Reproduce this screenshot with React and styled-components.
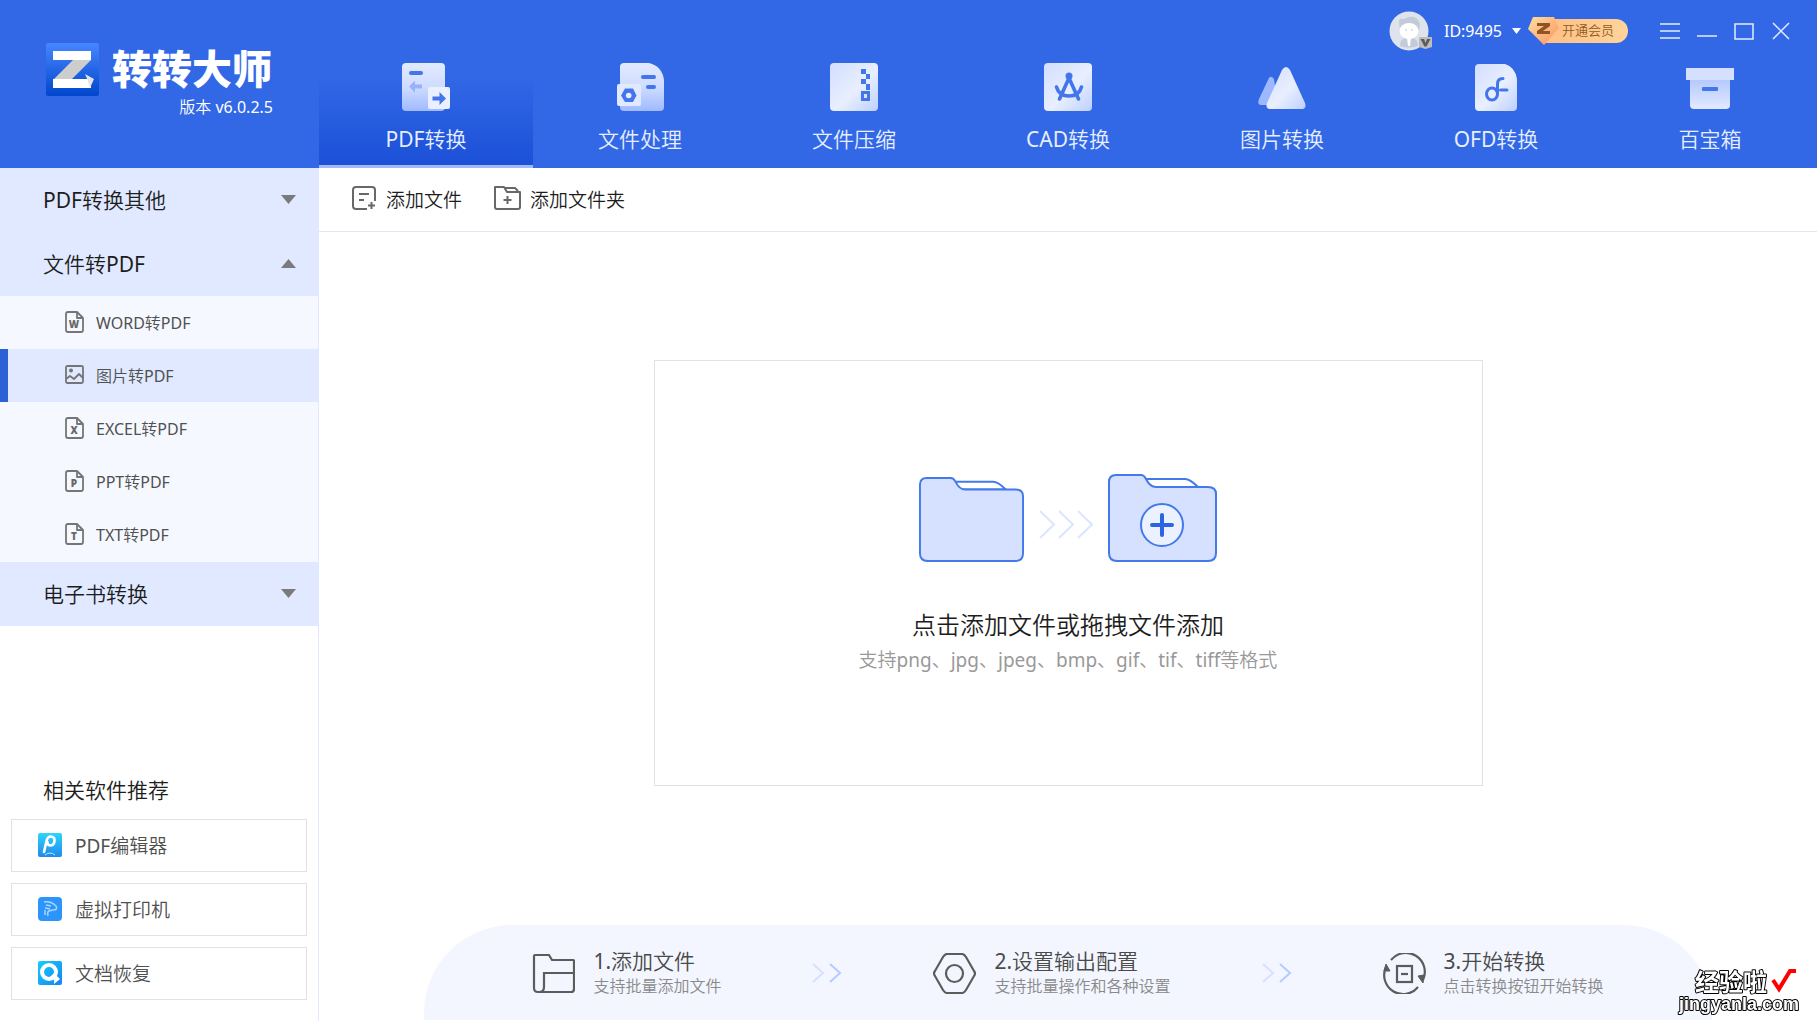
import React, { useState } from "react";
import styled, { createGlobalStyle } from "styled-components";

const GlobalStyle = createGlobalStyle`
  * {
    box-sizing: border-box;
  }
  body {
    margin: 0;
    background: #ffffff;
    font-family: "Noto Sans", "Noto Sans CJK SC DemiLight", "Noto Sans CJK SC", sans-serif;
  }
  button {
    font: inherit;
    border: 0;
    padding: 0;
    background: none;
    cursor: pointer;
  }
  h1, h2, p, ul {
    margin: 0;
    padding: 0;
    font-weight: inherit;
  }
  svg {
    display: block;
    flex-shrink: 0;
  }
`;

const Page = styled.div`
  min-height: 100vh;
  display: flex;
  flex-direction: column;
`;

/* ---------- header ---------- */

const Header = styled.header`
  display: flex;
  height: 168px;
  background: #3268e6;
  color: #ffffff;
`;

const Brand = styled.div`
  width: 319px;
  flex-shrink: 0;
  padding: 43px 46px 0;
`;

const BrandRow = styled.div`
  display: flex;
  align-items: flex-start;
  gap: 13px;
`;

const BrandName = styled.h1`
  font-family: "Noto Sans CJK SC", sans-serif;
  font-size: 40px;
  line-height: 48px;
  font-weight: 900;
  white-space: nowrap;
`;

const Version = styled.p`
  font-size: 16px;
  line-height: 22px;
  text-align: right;
`;

const HeaderMain = styled.div`
  flex: 1;
  min-width: 0;
  display: flex;
  flex-direction: column;
`;

const TopBar = styled.div`
  height: 51px;
  display: flex;
  justify-content: flex-end;
  align-items: center;
  padding: 11px 26px 0 0;
`;

const Account = styled.button`
  display: flex;
  align-items: center;
  color: #ffffff;
  font-size: 16px;
  gap: 10px;
`;

const Vip = styled.button`
  display: flex;
  align-items: center;
  margin: 0 32px 0 6px;
`;

const VipLabel = styled.span`
  height: 24px;
  line-height: 23px;
  margin-left: -16px;
  padding: 0 14px 0 18px;
  border-radius: 0 12px 12px 0;
  background: linear-gradient(90deg, #ffbf85, #ffd49a);
  color: #8f5a1e;
  font-size: 13px;
`;

const Gem = styled.svg`
  position: relative;
`;

const WindowButtons = styled.div`
  display: flex;
  gap: 17px;
`;

const Tabs = styled.nav`
  flex: 1;
  display: flex;
`;

const Tab = styled.button`
  flex: 1;
  display: flex;
  flex-direction: column;
  align-items: center;
  padding-top: 12px;
  color: #e6eeff;
  font-size: 21px;
  line-height: 30px;
  gap: 13px;
  border-bottom: 3px solid ${(props) => (props.$active ? "#9fb9fb" : "transparent")};
  background: ${(props) =>
    props.$active ? "linear-gradient(#3268e6 22%, #1b50d8) padding-box" : "none"};
`;

/* ---------- sidebar ---------- */

const Body = styled.div`
  flex: 1;
  display: flex;
`;

const Sidebar = styled.aside`
  width: 319px;
  flex-shrink: 0;
  display: flex;
  flex-direction: column;
  border-right: 1px solid #dfe8ff;
`;

const Group = styled.button`
  width: 100%;
  height: 64px;
  display: flex;
  align-items: center;
  justify-content: space-between;
  padding: 0 22px 2px 43px;
  background: #e0e9ff;
  color: #1d1d1d;
  font-size: 21px;
`;

const SubList = styled.ul`
  list-style: none;
  background: #f5f8ff;
  padding-bottom: 1px;
`;

const SubItem = styled.button`
  width: 100%;
  height: 53px;
  display: flex;
  align-items: center;
  gap: 12px;
  padding: 0 0 2px 57px;
  border-left: 8px solid ${(props) => (props.$active ? "#2c60d6" : "transparent")};
  background: ${(props) => (props.$active ? "#e0e9ff" : "none")};
  color: #505050;
  font-size: 16px;
`;

const Related = styled.section`
  margin-top: auto;
  padding: 0 11px 21px;
  display: flex;
  flex-direction: column;
  gap: 11px;
`;

const RelatedTitle = styled.h2`
  padding-left: 32px;
  font-size: 21px;
  line-height: 36px;
  color: #1d1d1d;
`;

const RelatedLink = styled.a`
  height: 53px;
  display: flex;
  align-items: center;
  gap: 13px;
  padding: 0 0 1px 26px;
  border: 1px solid #e2e2e2;
  color: #505050;
  font-size: 19px;
  text-decoration: none;
`;

/* ---------- main ---------- */

const Main = styled.main`
  flex: 1;
  min-width: 0;
  display: flex;
  flex-direction: column;
`;

const Toolbar = styled.div`
  height: 64px;
  display: flex;
  align-items: center;
  gap: 32px;
  padding: 0 0 2px 33px;
  border-bottom: 1px solid #e0e8f4;
`;

const ToolButton = styled.button`
  display: flex;
  align-items: center;
  gap: 9px;
  font-size: 19px;
  color: #1d1d1d;
`;

const Workspace = styled.div`
  flex: 1;
  display: flex;
  align-items: center;
  justify-content: center;
  padding: 16px 32px 27px;
`;

const DropZone = styled.button`
  width: 100%;
  max-width: 829px;
  height: 426px;
  display: flex;
  flex-direction: column;
  align-items: center;
  padding-top: 113px;
  border: 1px solid #e2e2e2;
`;

const DropArt = styled.span`
  display: flex;
  align-items: flex-end;
  gap: 15px;
  margin-bottom: 45px;
`;

const DropTitle = styled.span`
  font-size: 24px;
  line-height: 36px;
  color: #1d1d1d;
`;

const DropHint = styled.span`
  font-size: 19px;
  line-height: 34px;
  color: #999999;
`;

const Steps = styled.footer`
  height: 95px;
  margin: 0 105px 1px;
  padding-top: 1px;
  display: flex;
  align-items: center;
  justify-content: center;
  gap: 91px;
  border-radius: 88px 88px 0 0;
  background: #f3f6ff;
`;

const Step = styled.div`
  display: flex;
  align-items: center;
  gap: 18px;
`;

const StepTitle = styled.p`
  font-size: 21px;
  line-height: 26px;
  color: #4a4a4a;
`;

const StepHint = styled.p`
  font-size: 16px;
  line-height: 24px;
  color: #8a8a8a;
`;

const Watermark = styled.div`
  position: fixed;
  right: 14px;
  bottom: 1px;
  width: 126px;
`;

/* ---------- icons ---------- */

const LogoMark = () => (
  <svg width="53" height="53" viewBox="0 0 53 53">
    <defs>
      <linearGradient id="logoBg" x1="0" y1="0" x2="0" y2="1">
        <stop offset="0" stopColor="#4786ff" />
        <stop offset="1" stopColor="#0046cc" />
      </linearGradient>
    </defs>
    <rect width="53" height="53" rx="2" fill="url(#logoBg)" />
    <path d="M27 17H45L26 36H8Z" fill="#cdcdcd" />
    <path d="M7 8H45V17H7ZM7 36H45V45H7Z" fill="#fff" />
    <path d="M39 31L48 36L44 45L42 38Z" fill="#e3e3e3" />
  </svg>
);

const Gradients = () => (
  <svg width="0" height="0" style={{ position: "absolute" }} aria-hidden="true">
    <defs>
      <linearGradient id="sheet" x1="0" y1="0" x2="1" y2="1">
        <stop offset="0" stopColor="#d2defe" />
        <stop offset="0.55" stopColor="#e9efff" />
        <stop offset="1" stopColor="#bccffe" />
      </linearGradient>
      <linearGradient id="fade" x1="0" y1="0" x2="0" y2="1">
        <stop offset="0" stopColor="#e2eaff" />
        <stop offset="0.5" stopColor="#cfdcff" />
        <stop offset="1" stopColor="#9fbaff" />
      </linearGradient>
      <linearGradient id="rise" x1="0" y1="0" x2="0" y2="1">
        <stop offset="0" stopColor="#b4c8fd" />
        <stop offset="1" stopColor="#e2eaff" />
      </linearGradient>
    </defs>
  </svg>
);

const tabIcons = {
  pdf: (
    <>
      <rect x="0" y="0" width="43" height="48" rx="4" fill="url(#fade)" />
      <rect x="7" y="8" width="14" height="4" rx="2" fill="#4376ea" />
      <path d="M7 23.500L13 17.500V21.500H20V25.500H13V29.500Z" fill="#96b2fa" />
      <rect x="26" y="24" width="22" height="22" rx="2" fill="#eaf0ff" />
      <path d="M44 35.500L37.500 29V33.500H30.500V37.500H37.500V42Z" fill="#4376ea" />
    </>
  ),
  process: (
    <>
      <path d="M8 0H33Q46 3 48 17V44Q48 48 44 48H8Q4 48 4 44V4Q4 0 8 0Z" fill="url(#fade)" />
      <rect x="25" y="12" width="15" height="4" rx="2" fill="#4376ea" />
      <rect x="30" y="22" width="10" height="4" rx="2" fill="#4376ea" />
      <rect x="1" y="21" width="24" height="22" rx="2" fill="#e0e9ff" />
      <path d="M9 25.500H17L20.500 32.500L17 39H9L5 32.500Z" fill="#4376ea" />
      <circle cx="12.700" cy="32.500" r="2.800" fill="#e6edff" />
    </>
  ),
  zip: (
    <>
      <rect x="0" y="0" width="48" height="48" rx="4" fill="url(#sheet)" />
      <path d="M31 6H36V11H40V16H36V11H31ZM31 16H36V21H40V27H36V21H31Z" fill="#4376ea" />
      <rect x="32.500" y="29.500" width="6" height="7" fill="none" stroke="#4376ea" strokeWidth="3" />
    </>
  ),
  cad: (
    <>
      <rect x="0" y="0" width="48" height="48" rx="4" fill="url(#sheet)" />
      <circle cx="25" cy="13" r="3.500" fill="#4376ea" />
      <path
        d="M25 15L15.500 36M25 15L34.500 36M12.500 24Q15 33 25 33Q35 33 37.500 24"
        fill="none"
        stroke="#4376ea"
        strokeWidth="3.600"
        strokeLinecap="round"
      />
    </>
  ),
  image: (
    <>
      <path d="M10 17Q12 11 16 16L20 42H3Q-1 42 1 36Z" fill="#9db8ff" />
      <path d="M24 7Q28 1 32 7L47 40Q49 46 43 46H13Q7 46 9 40Z" fill="url(#sheet)" />
    </>
  ),
  ofd: (
    <>
      <path d="M7 1H33Q43 4 45 16V44Q45 48 41 48H7Q3 48 3 44V5Q3 1 7 1Z" fill="url(#sheet)" />
      <path
        d="M31 15.500Q25.500 15.500 25.500 21V31M28.500 27H35"
        fill="none"
        stroke="#4376ea"
        strokeWidth="3"
        strokeLinecap="round"
      />
      <ellipse cx="20" cy="31" rx="5.500" ry="6" fill="none" stroke="#4376ea" strokeWidth="3" />
    </>
  ),
  box: (
    <>
      <path d="M4 16H44V42Q44 46 40 46H8Q4 46 4 42Z" fill="url(#rise)" />
      <rect x="0" y="5" width="48" height="12" fill="#d5e0ff" />
      <rect x="16" y="24" width="16" height="4" rx="1" fill="#4376ea" />
    </>
  ),
};

const tabs = [
  { id: "pdf", label: "PDF转换" },
  { id: "process", label: "文件处理" },
  { id: "zip", label: "文件压缩" },
  { id: "cad", label: "CAD转换" },
  { id: "image", label: "图片转换" },
  { id: "ofd", label: "OFD转换" },
  { id: "box", label: "百宝箱" },
];

const Avatar = () => (
  <svg width="45" height="40" viewBox="0 0 45 40">
    <circle cx="20" cy="20" r="19.500" fill="#dfe3ec" />
    <path d="M10 12Q9 7 15 8Q22 4 27 7Q33 11 30 19H11Z" fill="#c3cad8" />
    <path d="M11 35Q11 28 16 27H24Q29 28 29 35Q20 38 11 35Z" fill="#c3cad8" />
    <path d="M18 27H22L21 35H19Z" fill="#fff" />
    <ellipse cx="20" cy="20" rx="9.500" ry="8" fill="#fff" />
    <circle cx="17" cy="19" r="1" fill="#d5dae4" />
    <circle cx="23" cy="19" r="1" fill="#d5dae4" />
    <path d="M30 26H43V36L36.500 38L30 36Z" fill="#bdbdbd" />
    <path d="M31.500 28H35L36.500 32L38 28H41.500L37.500 35.500H35.500Z" fill="#5c5c5c" />
  </svg>
);

const Arrow = ({ up }) => (
  <svg width="15" height="9" viewBox="0 0 15 9">
    <path d={up ? "M7.500 0L15 9H0Z" : "M0 0H15L7.500 9Z"} fill="#7a7a7a" />
  </svg>
);

const FileIcon = ({ letter }) => (
  <svg width="19" height="22" viewBox="0 0 19 22">
    <g fill="none" stroke="#757575" strokeWidth="1.800" strokeLinejoin="round">
      <path d="M3 1H12L18 7V19Q18 21 16 21H3Q1 21 1 19V3Q1 1 3 1Z" />
      <path d="M12 1V7H18" />
    </g>
    <text
      x="9"
      y="17"
      textAnchor="middle"
      fontFamily="Open Sans"
      fontSize="10"
      fontWeight="800"
      fill="#686868"
    >
      {letter}
    </text>
  </svg>
);

const PictureIcon = () => (
  <svg width="19" height="19" viewBox="0 0 19 19">
    <g fill="none" stroke="#757575" strokeWidth="1.800" strokeLinejoin="round">
      <rect x="1" y="1" width="17" height="17" rx="1.500" />
      <path d="M1 14L5 11L9 14L14 9L18 13" />
    </g>
    <circle cx="6" cy="5.500" r="2" fill="#757575" />
  </svg>
);

const AddFileIcon = () => (
  <svg width="25" height="25" viewBox="0 0 25 25" fill="none" stroke="#686868" strokeWidth="2">
    <path d="M23 15V4Q23 1 20 1H4Q1 1 1 4V20Q1 23 4 23H15" />
    <path d="M7 8H17M7 14H12M19.500 16V23M16 19.500H23" />
  </svg>
);

const AddFolderIcon = () => (
  <svg width="27" height="25" viewBox="0 0 27 25" fill="none" stroke="#686868" strokeWidth="2">
    <path d="M1 21V1H10L13 6H26V21Q26 23 24 23H3Q1 23 1 21Z" strokeLinejoin="round" />
    <path d="M11 2H21L24 5M13.500 10V18M9.500 14H17.500" />
  </svg>
);

const PdfEditorIcon = () => (
  <svg width="24" height="24" viewBox="0 0 24 24">
    <defs>
      <linearGradient id="editor" x1="0" y1="0" x2="0" y2="1">
        <stop offset="0" stopColor="#2fd5f8" />
        <stop offset="1" stopColor="#2187ee" />
      </linearGradient>
    </defs>
    <rect width="24" height="24" rx="2" fill="url(#editor)" />
    <path
      d="M6 19L8.500 8Q9.500 3.500 13 3.500Q17 4 16.500 8Q16 12.500 12 12.500Q9 12 9.500 9"
      fill="none"
      stroke="#fff"
      strokeWidth="2.600"
      strokeLinecap="round"
    />
    <path d="M7 22Q12 18 17 22" fill="none" stroke="#bfe9ff" />
  </svg>
);

const PrinterIcon = () => (
  <svg width="24" height="24" viewBox="0 0 24 24">
    <rect width="24" height="24" rx="4" fill="#2b95fb" />
    <path
      d="M6 5Q13 4 18 9Q20 13 15 13L11 14Q9 15 10 19M8 8L13 9M7 11L12 12M7 13V18"
      fill="none"
      stroke="#a9d6ff"
      strokeWidth="1.500"
    />
  </svg>
);

const RecoverIcon = () => (
  <svg width="24" height="24" viewBox="0 0 24 24">
    <defs>
      <linearGradient id="recover" x1="0" y1="0" x2="1" y2="1">
        <stop offset="0" stopColor="#16cdf8" />
        <stop offset="1" stopColor="#1583f5" />
      </linearGradient>
    </defs>
    <rect width="24" height="24" rx="2" fill="url(#recover)" />
    <circle cx="11" cy="11" r="7" fill="none" stroke="#fff" strokeWidth="4" />
    <path d="M12 16L16 12L22 18L16 23V19Z" fill="#fff" />
  </svg>
);

const FolderArt = ({ plus }) => (
  <svg
    width={plus ? 109 : 105}
    height={plus ? 88 : 85}
    viewBox="0 0 109 88"
    preserveAspectRatio="none"
    stroke="#4379ea"
    strokeWidth="2"
    strokeLinejoin="round"
  >
    <path d="M37 5H77Q82 5 90 13H40Z" fill="#fff" />
    <path
      d="M8 1H33Q36 1 38 5Q42 13 48 13H100Q108 13 108 20V79Q108 87 100 87H9Q1 87 1 79V8Q1 1 8 1Z"
      fill="#d5e1ff"
    />
    {plus && (
      <>
        <circle cx="54" cy="51" r="21" fill="#ecf1ff" />
        <path d="M44 51H64M54 41V61" strokeWidth="4" stroke="#2c63e4" strokeLinecap="round" />
      </>
    )}
  </svg>
);

const FlowArrows = () => (
  <svg width="54" height="75" viewBox="0 0 54 75" fill="none" stroke="#dbe5ff" strokeWidth="2">
    <path d="M1 24L15 37.500L1 51M20 24L34 37.500L20 51M39 24L53 37.500L39 51" />
  </svg>
);

const StepArrows = () => (
  <svg width="30" height="20" viewBox="0 0 30 20" fill="none" strokeWidth="2">
    <path d="M1 1L11 10L1 19" stroke="#d6e1ff" />
    <path d="M18 1L28 10L18 19" stroke="#b3cbff" />
  </svg>
);

const stepProps = {
  width: 43,
  height: 41,
  viewBox: "0 0 43 41",
  fill: "none",
  stroke: "#5c5c5c",
  strokeWidth: 2.2,
};

const StepFolder = () => (
  <svg {...stepProps}>
    <path d="M2 35V3Q2 2 3 2H17L20 7H41Q42 7 42 8V36Q42 39 39 39H6Q2 39 2 35" />
    <path d="M42 20H12V34Q12 39 7 39" />
  </svg>
);

const StepNut = () => (
  <svg {...stepProps}>
    <path d="M14 1H29Q31 1 33 4L41 18Q43 20.500 41 23L33 37Q31 40 29 40H14Q12 40 10 37L2 23Q0 20.500 2 18L10 4Q12 1 14 1Z" />
    <circle cx="21.500" cy="20.500" r="8.500" />
  </svg>
);

const StepConvert = () => (
  <svg {...stepProps}>
    <path d="M8 7A19 19 0 0 1 40 27M35 34A19 19 0 0 1 3 14" />
    <path d="M40 30L35 23L41 22ZM3 11L1 18L7 18Z" fill="#5c5c5c" strokeWidth="1" />
    <rect x="14" y="13" width="15" height="16" />
    <path d="M18 21H25" />
  </svg>
);

const groups = [
  { label: "PDF转换其他" },
  {
    label: "文件转PDF",
    items: [
      { label: "WORD转PDF", letter: "W" },
      { label: "图片转PDF" },
      { label: "EXCEL转PDF", letter: "X" },
      { label: "PPT转PDF", letter: "P" },
      { label: "TXT转PDF", letter: "T" },
    ],
  },
  { label: "电子书转换" },
];

const related = [
  { label: "PDF编辑器", Icon: PdfEditorIcon },
  { label: "虚拟打印机", Icon: PrinterIcon },
  { label: "文档恢复", Icon: RecoverIcon },
];

const steps = [
  { title: "1.添加文件", hint: "支持批量添加文件", Icon: StepFolder },
  { title: "2.设置输出配置", hint: "支持批量操作和各种设置", Icon: StepNut },
  { title: "3.开始转换", hint: "点击转换按钮开始转换", Icon: StepConvert },
];

const windowIcons = [
  { label: "菜单", d: "M0 2H20M0 9H20M0 16H20" },
  { label: "最小化", d: "M0 14H20" },
  { label: "最大化", d: "M1 2H19V17H1Z" },
  { label: "关闭", d: "M2 1L18 17M18 1L2 17" },
];

const App = () => {
  const [tab, setTab] = useState("pdf");
  const [current, setCurrent] = useState("图片转PDF");

  return (
    <Page>
      <GlobalStyle />
      <Gradients />
      <Header>
        <Brand>
          <BrandRow>
            <LogoMark />
            <BrandName>转转大师</BrandName>
          </BrandRow>
          <Version>版本 v6.0.2.5</Version>
        </Brand>
        <HeaderMain>
          <TopBar>
            <Account>
              <Avatar />
              ID:9495
              <svg width="9" height="6" viewBox="0 0 9 6">
                <path d="M0 0H9L4.500 6Z" fill="#fff" />
              </svg>
            </Account>
            <Vip>
              <Gem width="33" height="30" viewBox="0 0 33 30">
                <defs>
                  <linearGradient id="gem" x1="0" y1="0" x2="1" y2="1">
                    <stop offset="0" stopColor="#ffdf9f" />
                    <stop offset="1" stopColor="#fb9160" />
                  </linearGradient>
                </defs>
                <path d="M6 1H27L32 12L17 29L1 13Z" fill="url(#gem)" />
                <path d="M10 7H23V10L16 15H23V18H10V15L17 10H10Z" fill="#8f5423" />
              </Gem>
              <VipLabel>开通会员</VipLabel>
            </Vip>
            <WindowButtons>
              {windowIcons.map(({ label, d }) => (
                <button key={label} aria-label={label}>
                  <svg width="20" height="18" viewBox="0 0 20 18">
                    <path d={d} fill="none" stroke="#e3ecff" strokeWidth="1.500" />
                  </svg>
                </button>
              ))}
            </WindowButtons>
          </TopBar>
          <Tabs>
            {tabs.map(({ id, label }) => (
              <Tab key={id} $active={id === tab} onClick={() => setTab(id)}>
                <svg width="48" height="48" viewBox="0 0 48 48">
                  {tabIcons[id]}
                </svg>
                {label}
              </Tab>
            ))}
          </Tabs>
        </HeaderMain>
      </Header>

      <Body>
        <Sidebar>
          {groups.map(({ label, items }) => (
            <div key={label}>
              <Group>
                {label}
                <Arrow up={Boolean(items)} />
              </Group>
              {items && (
                <SubList>
                  {items.map((item) => (
                    <li key={item.label}>
                      <SubItem
                        $active={item.label === current}
                        onClick={() => setCurrent(item.label)}
                      >
                        {item.letter ? <FileIcon letter={item.letter} /> : <PictureIcon />}
                        {item.label}
                      </SubItem>
                    </li>
                  ))}
                </SubList>
              )}
            </div>
          ))}
          <Related>
            <RelatedTitle>相关软件推荐</RelatedTitle>
            {related.map(({ label, Icon }) => (
              <RelatedLink key={label} href="#">
                <Icon />
                {label}
              </RelatedLink>
            ))}
          </Related>
        </Sidebar>

        <Main>
          <Toolbar>
            <ToolButton>
              <AddFileIcon />
              添加文件
            </ToolButton>
            <ToolButton>
              <AddFolderIcon />
              添加文件夹
            </ToolButton>
          </Toolbar>
          <Workspace>
            <DropZone>
              <DropArt>
                <FolderArt />
                <FlowArrows />
                <FolderArt plus />
              </DropArt>
              <DropTitle>点击添加文件或拖拽文件添加</DropTitle>
              <DropHint>支持png、jpg、jpeg、bmp、gif、tif、tiff等格式</DropHint>
            </DropZone>
          </Workspace>
          <Steps>
            {steps.map(({ title, hint, Icon }, i) => (
              <React.Fragment key={title}>
                {i > 0 && <StepArrows />}
                <Step>
                  <Icon />
                  <div>
                    <StepTitle>{title}</StepTitle>
                    <StepHint>{hint}</StepHint>
                  </div>
                </Step>
              </React.Fragment>
            ))}
          </Steps>
        </Main>
      </Body>

      <Watermark>
        <svg width="126" height="60" viewBox="0 0 126 60">
          <g
            fill="#fff"
            stroke="#000"
            strokeWidth="2"
            paintOrder="stroke"
            strokeLinejoin="round"
            fontWeight="700"
          >
            <text x="18" y="31" fontSize="24" fontFamily="Liberation Sans, Noto Sans CJK SC">
              经验啦
            </text>
            <text x="2" y="50" fontSize="18" fontFamily="Liberation Sans">
              jingyanla.com
            </text>
          </g>
          <path d="M96 20L102 29L113 11H119" fill="none" stroke="#f00" strokeWidth="4" />
        </svg>
      </Watermark>
    </Page>
  );
};

export default App;
